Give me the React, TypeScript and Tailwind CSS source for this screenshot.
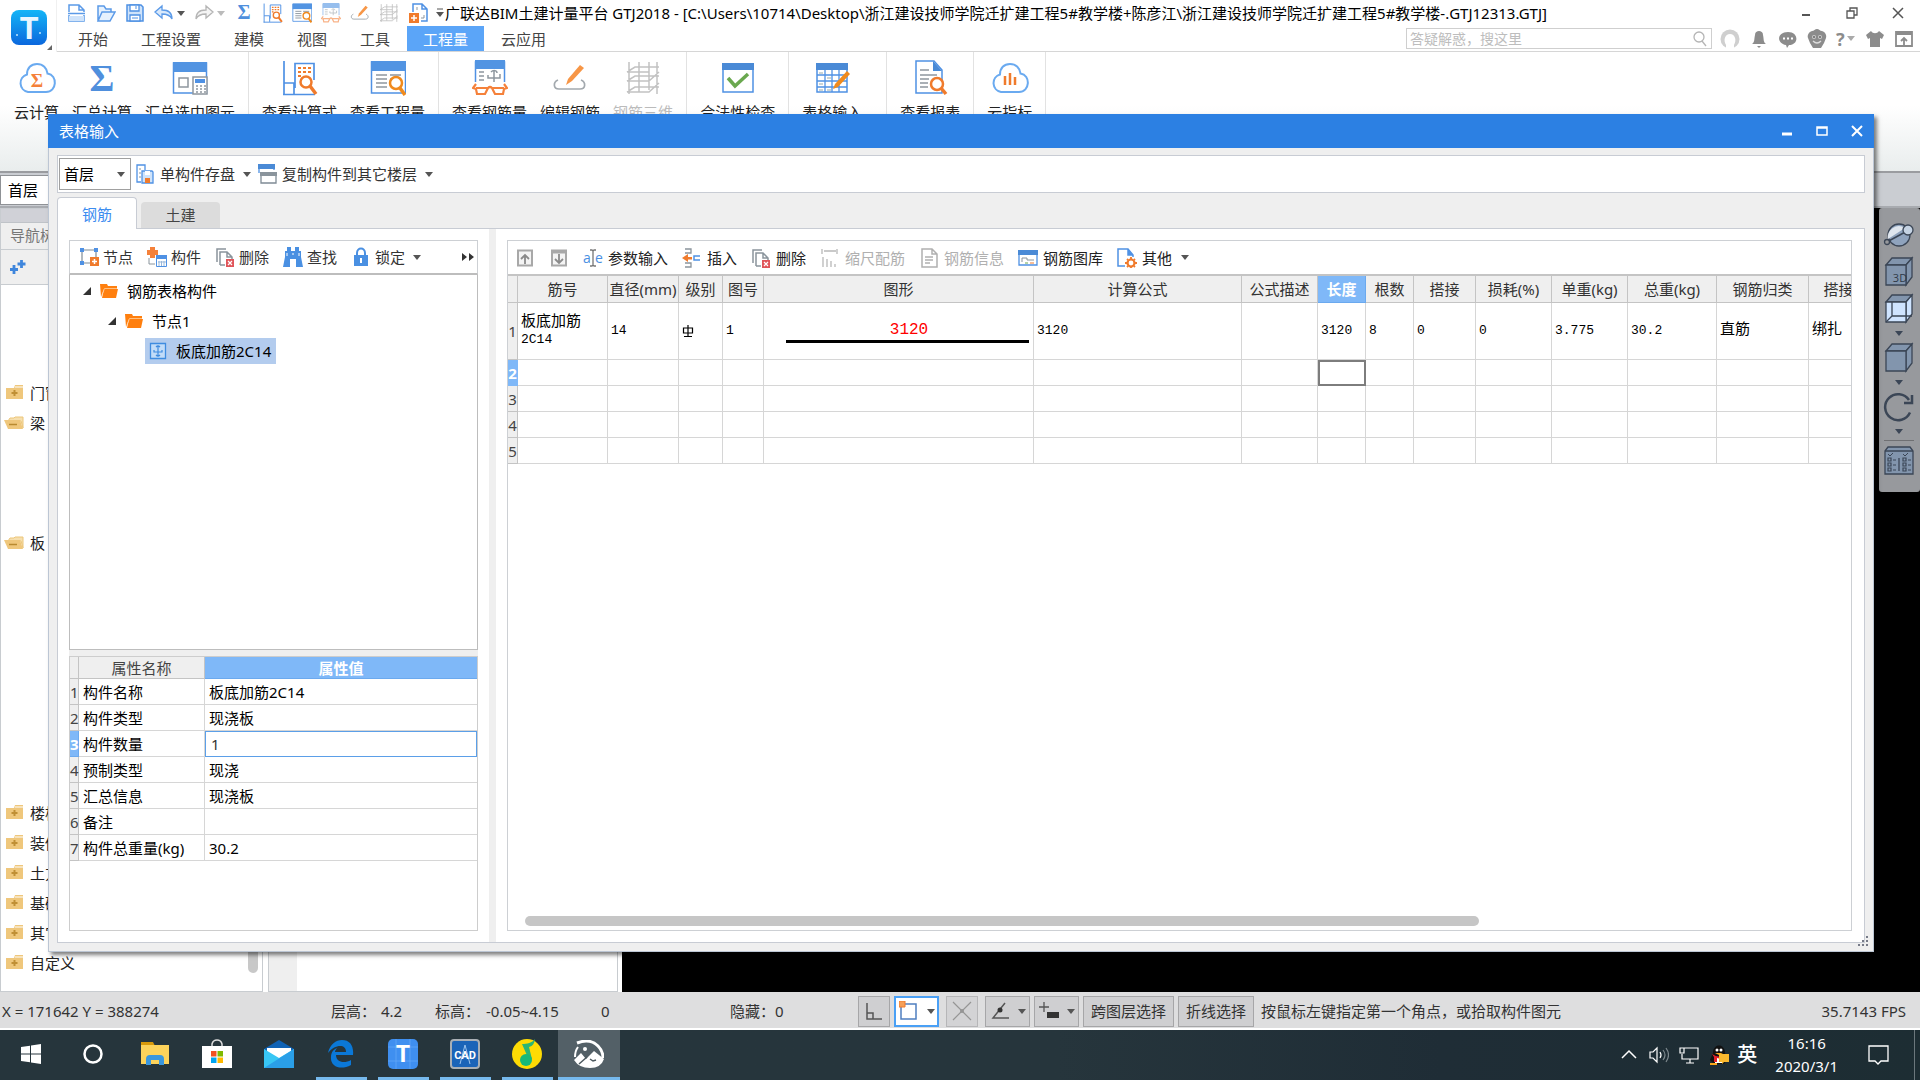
import type { ReactNode } from "react"

type IconProps = { children: ReactNode; w?: number; h?: number; className?: string }

function Icon({ children, w = 20, h = 20, className = "" }: IconProps) {
  return (
    <svg width={w} height={h} viewBox={`0 0 ${w} ${h}`} fill="none" className={`shrink-0 ${className}`} aria-hidden="true">
      {children}
    </svg>
  )
}

function Caret({ className = "text-[#555]" }: { className?: string }) {
  return (
    <Icon w={8} h={5} className={className}>
      <path d="M0 0h8L4 5z" fill="currentColor" />
    </Icon>
  )
}

/* ---------- quick access icons ---------- */

const NewFileIcon = () => (
  <Icon>
    <path d="M2 9V2h10l5 5v2M12 2v5h5M2 12v6h15v-6M1 10.500h17" stroke="#5b9ae8" strokeWidth="1.500" />
    <path d="M2 13h15v5H2z" fill="#cfe3fa" />
  </Icon>
)
const OpenIcon = () => (
  <Icon>
    <path d="M2 18V3h6l2 3h5v3M2 18l4-9h13l-5 9z" stroke="#5b9ae8" strokeWidth="1.500" fill="#e6f1fd" />
  </Icon>
)
const SaveIcon = () => (
  <Icon>
    <path d="M2 2h14l2 2v14H2z" fill="#cfe3fa" stroke="#4f91e4" strokeWidth="1.500" />
    <path d="M5 2h9v6H5z" fill="#fff" stroke="#4f91e4" strokeWidth="1.300" />
    <path d="M5 12h10v6H5z" fill="#fff" stroke="#4f91e4" strokeWidth="1.300" />
    <path d="M11 3v3M7 15h6" stroke="#4f91e4" />
  </Icon>
)
const UndoIcon = () => (
  <Icon>
    <path d="M1 9l7-6v4c7 0 10 3 10 9-2-4-5-5-10-5v4z" fill="#d9e9fb" stroke="#5b9ae8" strokeWidth="1.300" />
  </Icon>
)
const RedoIcon = () => (
  <Icon>
    <path d="M19 9l-7-6v4C5 7 2 10 2 16c2-4 5-5 10-5v4z" fill="#f4f4f4" stroke="#b5b5b5" strokeWidth="1.300" />
  </Icon>
)

const FormulaLookup = ({ size = 20 }: { size?: number }) => (
  <svg width={size} height={size} viewBox="0 0 36 36" fill="none" aria-hidden="true">
    <path d="M2 1v34M1 34.500h32M2 23h10v11M13 28V3.500h19V20" stroke="#4f91e4" strokeWidth="1.700" />
    <path d="M16 8h3m2 0h3m2 0h3M16 12h3m2 0h3m2 0h3M16 16h3" stroke="#f07b2c" strokeWidth="2.200" />
    <circle cx="24" cy="22" r="5.500" fill="#fff" stroke="#f07b2c" strokeWidth="2.500" />
    <path d="M28 26l6 8" stroke="#f07b2c" strokeWidth="3.500" />
  </svg>
)
const QuantityLookup = ({ size = 20 }: { size?: number }) => (
  <svg width={size} height={size} viewBox="0 0 36 36" fill="none" aria-hidden="true">
    <path d="M1.500 2h34v31h-34z" fill="#fff" stroke="#4f91e4" strokeWidth="1.500" />
    <path d="M1 1h35v10H1z" fill="#5294e2" />
    <path d="M6 15h11m3 0h11M6 19h11m3 0h5M6 23h11M6 27h11" stroke="#8e979f" strokeWidth="1.700" />
    <circle cx="26" cy="23" r="6" fill="#fff" stroke="#f08a1d" strokeWidth="2.500" />
    <path d="M30 28l5 7" stroke="#f08a1d" strokeWidth="3.500" />
  </svg>
)
const RebarGlasses = ({ size = 20 }: { size?: number }) => (
  <svg width={size} height={size} viewBox="0 0 36 36" fill="none" aria-hidden="true">
    <path d="M3.500 22V2h29v20" stroke="#4f91e4" strokeWidth="1.500" />
    <path d="M3 0h30v9H3z" fill="#5294e2" />
    <path d="M7 12h5M7 16h5M7 20h5M22 11v11M16 15v3h12v-4M19 12c2-2 6-2 6 1" stroke="#8e979f" strokeWidth="1.500" />
    <path d="M4 24L1 28l3 1 1 5h8l3-6H4M32 24l3 4-3 1-1 5h-8l-3-6h12M16 28q2-2 4 0" stroke="#f5813a" strokeWidth="2.200" />
  </svg>
)
const PencilEdit = ({ size = 20 }: { size?: number }) => (
  <svg width={size} height={size} viewBox="0 0 36 36" fill="none" aria-hidden="true">
    <path d="M6 20c-5 2-5 9 1 9h21c6 0 6-7 1-9" stroke="#a3a9ae" strokeWidth="1.700" />
    <path d="M28 5l4 3-12 13-6 4 2-6z" fill="#f79646" />
  </svg>
)
const Grid3d = ({ size = 20 }: { size?: number }) => (
  <svg width={size} height={size} viewBox="0 0 36 36" fill="none" aria-hidden="true">
    <path d="M4 2v32M14 2v30M24 2v28M32 2v32M2 32l8-5h24M2 21l8-5h24M2 12l8-5h24M2 32h22l10-9M2 21h22l10-9M2 12h22" stroke="#c2c2c2" strokeWidth="1.500" />
  </svg>
)
const PageAdd = () => (
  <Icon>
    <path d="M5 9V1h9l5 5v12h-6M14 1v5h5" stroke="#4f91e4" strokeWidth="1.500" />
    <path d="M9 7V4M13 15h3v-3" stroke="#8e979f" />
    <path d="M1 10h10v10H1z" fill="#f07b2c" />
    <path d="M6 12v6M3 15h6" stroke="#fff" strokeWidth="1.500" />
  </Icon>
)

/* ---------- ribbon icons ---------- */

const Cloud = ({ children }: { children: ReactNode }) => (
  <Icon w={40} h={36}>
    <path
      d="M11 32a9 9 0 0 1-1-17.500C10 8 14 4 20 4s10 4 10.500 9.500C41 15 40 32 29 32z"
      stroke="#6aaaf0"
      strokeWidth="2"
    />
    {children}
  </Icon>
)
const SumSelected = () => (
  <Icon w={36} h={36}>
    <path d="M1.500 3h33v30h-33z" fill="#fff" stroke="#4f91e4" strokeWidth="1.500" />
    <path d="M1 2h34v10H1z" fill="#5294e2" />
    <path d="M7 18h9v9H7z" stroke="#8e979f" strokeWidth="1.500" />
    <path d="M21 17h14v17H21z" fill="#fff" stroke="#8e979f" strokeWidth="1.500" />
    <path d="M23 19h10v4H23z" fill="#4f91e4" />
    <path d="M24 26h2m2 0h2m2 0h2M24 29h2m2 0h2m2 0h2M24 32h2m2 0h2m2 0h2" stroke="#8e979f" strokeWidth="1.500" />
  </Icon>
)
const CheckIcon = () => (
  <Icon w={36} h={36}>
    <path d="M3 4h30v28H3z" fill="#fff" stroke="#4f91e4" strokeWidth="1.500" />
    <path d="M2 3h32v7H2z" fill="#4a8ad6" />
    <path d="M8 18l7 8 13-12" stroke="#6aa84f" strokeWidth="3.500" />
  </Icon>
)
const TableEdit = () => (
  <Icon w={36} h={36}>
    <path d="M3 4h30v28H3z" fill="#fff" stroke="#4f91e4" strokeWidth="1.500" />
    <path d="M2 3h32v7H2z" fill="#4a8ad6" />
    <path d="M3 15h30M3 21h30M3 27h30M11 10v22M18 10v22M25 10v22" stroke="#4f91e4" strokeWidth="1.300" />
    <path d="M5 13h4M13 18h4M5 24h4M5 30h4M13 30h4" stroke="#9aa" />
    <path d="M33 11l3 3-12 13-5 2 2-5z" fill="#f08a1d" />
  </Icon>
)
const ReportIcon = () => (
  <Icon w={36} h={36}>
    <path d="M4 1h18l8 9v23H4z" fill="#fff" stroke="#4f91e4" strokeWidth="1.500" />
    <path d="M21 1v10h9z" fill="#4a8ad6" />
    <path d="M8 10h9M8 15h17M8 19h9M8 23h8M8 27h8" stroke="#8e979f" strokeWidth="1.500" />
    <circle cx="25" cy="24" r="6" fill="#fff" stroke="#f07b2c" strokeWidth="2.500" />
    <path d="M29 28l5 6" stroke="#f07b2c" strokeWidth="3.500" />
  </Icon>
)

const Sigma = ({ className }: { className: string }) => (
  <span className={`font-['Liberation_Serif',serif] font-bold ${className}`}>Σ</span>
)

type RibbonItem = { label: string; icon: ReactNode; off?: boolean }

const ribbonGroups: { wide?: boolean; items: RibbonItem[] }[] = [
  {
    items: [
      {
        label: "云计算",
        icon: (
          <Cloud>
            <text x="20" y="27" textAnchor="middle" fill="#f5813a" fontSize="19" fontWeight="700" fontFamily="Liberation Serif">
              Σ
            </text>
          </Cloud>
        ),
      },
      { label: "汇总计算", icon: <Sigma className="text-[38px] leading-9 text-[#4f8fdd]" /> },
      { label: "汇总选中图元", icon: <SumSelected /> },
    ],
  },
  {
    items: [
      { label: "查看计算式", icon: <FormulaLookup size={36} /> },
      { label: "查看工程量", icon: <QuantityLookup size={36} /> },
    ],
  },
  {
    items: [
      { label: "查看钢筋量", icon: <RebarGlasses size={36} /> },
      { label: "编辑钢筋", icon: <PencilEdit size={36} /> },
      { label: "钢筋三维", icon: <Grid3d size={36} />, off: true },
    ],
  },
  { items: [{ label: "合法性检查", icon: <CheckIcon /> }] },
  { wide: true, items: [{ label: "表格输入", icon: <TableEdit /> }] },
  { items: [{ label: "查看报表", icon: <ReportIcon /> }] },
  {
    items: [
      {
        label: "云指标",
        icon: (
          <Cloud>
            <path d="M15 25v-9M20 25V13M25 25v-8" stroke="#f07b2c" strokeWidth="2.500" />
          </Cloud>
        ),
      },
    ],
  },
]

const menuTabs = ["开始", "工程设置", "建模", "视图", "工具", "工程量", "云应用"]

function AppHeader() {
  return (
    <header className="flex h-[52px] bg-white">
      <div className="relative w-[57px] shrink-0 border-r border-[#f0f0f0]">
        <svg width="36" height="44" viewBox="0 0 36 44" className="mt-1.5 ml-[11px]" aria-hidden="true">
          <defs>
            <linearGradient id="logo" x1="0" y1="0" x2="0" y2="1">
              <stop offset="0" stopColor="#13b5f7" />
              <stop offset="1" stopColor="#0b67dd" />
            </linearGradient>
          </defs>
          <rect y="4" width="36" height="35" rx="8" fill="url(#logo)" />
          <text x="18" y="33" textAnchor="middle" fill="#e8f6ff" fontSize="31" fontWeight="900" fontFamily="Lato">
            T
          </text>
          <circle cx="6" cy="29" r="1" fill="#bfe6ff" />
          <circle cx="29" cy="27" r="1" fill="#bfe6ff" />
        </svg>
        <svg width="5" height="5" className="absolute right-1 bottom-[2px]" aria-hidden="true">
          <path d="M5 0v5H0z" fill="#666" />
        </svg>
      </div>
      <div className="flex min-w-0 flex-1 flex-col border-b border-[#d6d6d6]">
        <div className="flex h-[26px] items-center pl-[10px]">
          <div className="flex items-center gap-[9px]">
            <button aria-label="新建"><NewFileIcon /></button>
            <button aria-label="打开"><OpenIcon /></button>
            <button aria-label="保存"><SaveIcon /></button>
            <button aria-label="撤销" className="flex items-center gap-[3px]"><UndoIcon /><Caret /></button>
            <button aria-label="恢复" className="flex items-center gap-[3px]"><RedoIcon /><Caret className="text-[#bbb]" /></button>
            <button aria-label="汇总" className="w-5"><Sigma className="text-xl leading-5 text-[#4f8fdd]" /></button>
            <button aria-label="查看计算式"><FormulaLookup /></button>
            <button aria-label="查看工程量"><QuantityLookup /></button>
            <button aria-label="查看钢筋量" className="opacity-60"><RebarGlasses /></button>
            <button aria-label="编辑钢筋"><PencilEdit /></button>
            <button aria-label="钢筋三维"><Grid3d /></button>
            <button aria-label="添加"><PageAdd /></button>
          </div>
          <button aria-label="更多" className="ml-2">
            <Icon w={8} h={10}>
              <path d="M1 1h6" stroke="#555" />
              <path d="M0 4h8L4 9z" fill="#555" />
            </Icon>
          </button>
          <h1 className="ml-px truncate text-[15px] leading-6 text-black">
            广联达BIM土建计量平台 GTJ2018 - [C:\Users\10714\Desktop\浙江建设技师学院迁扩建工程5#教学楼+陈彦江\浙江建设技师学院迁扩建工程5#教学楼-.GTJ12313.GTJ]
          </h1>
          <div className="ml-auto flex items-center gap-[34px] pr-4 text-[#555]">
            <button aria-label="最小化"><Icon w={12} h={12}><path d="M2 8h8" stroke="currentColor" strokeWidth="2" /></Icon></button>
            <button aria-label="还原"><Icon w={12} h={12}><path d="M1 4h7v7H1zM4 4V1h7v7H8" stroke="currentColor" strokeWidth="1.300" /></Icon></button>
            <button aria-label="关闭"><Icon w={12} h={12}><path d="M1 1l10 10M11 1L1 11" stroke="currentColor" strokeWidth="1.500" /></Icon></button>
          </div>
        </div>
        <div className="flex h-[25px] items-center justify-between">
          <nav className="flex gap-px pl-[5px]">
            {menuTabs.map((tab) => (
              <button
                key={tab}
                className={`h-[25px] px-4 text-[15px] leading-6 ${tab === "工程量" ? "bg-[#5ba5f8] text-white" : "text-[#444]"}`}
              >
                {tab}
              </button>
            ))}
          </nav>
          <div className="flex items-center text-[#8c8c8c]">
            <label className="mr-2 flex h-[21px] w-[306px] items-center border border-[#cfcfcf] bg-white px-[3px]">
              <input
                aria-label="搜索"
                placeholder="答疑解惑，搜这里"
                className="min-w-0 flex-1 text-sm leading-5 outline-none placeholder:text-[#bdbdbd]"
              />
              <Icon w={18} h={16}>
                <circle cx="9" cy="6" r="5" stroke="#b5b5b5" strokeWidth="1.300" />
                <path d="M12 10l4 5" stroke="#b5b5b5" strokeWidth="1.300" />
              </Icon>
            </label>
            <div className="flex items-center gap-[9px] pr-[6px]">
              <button aria-label="用户">
                <Icon>
                  <circle cx="10" cy="10" r="9.500" fill="#cfcfcf" />
                  <path d="M6 20v-4c-3-5-1-11 4-11s7 6 4 11v4z" fill="#fff" />
                </Icon>
              </button>
              <button aria-label="通知">
                <Icon><path d="M3 15c3-2 2-5 3-9 0-3 2-4 4-4s4 1 4 4c1 4 0 7 3 9zM8 17h4l-2 2z" fill="currentColor" /></Icon>
              </button>
              <button aria-label="消息">
                <Icon>
                  <path d="M10 3c11 0 11 13 1 13l-2 3-1-3C-2 14-1 3 10 3z" fill="currentColor" />
                  <path d="M5 9.500h2m2 0h2m2 0h2" stroke="#fff" strokeWidth="2" />
                </Icon>
              </button>
              <button aria-label="客服">
                <Icon>
                  <path d="M10 0c2 0 3 2 5 2 3 1 5 4 4 7l-2 5-3 5H6l-3-5-2-5C0 6 2 3 5 2c2 0 3-2 5-2z" fill="currentColor" />
                  <circle cx="7" cy="8" r="2" fill="#ccc" />
                  <circle cx="13" cy="8" r="2" fill="#ccc" />
                  <circle cx="7" cy="8" r="1" fill="#666" />
                  <circle cx="13" cy="8" r="1" fill="#666" />
                  <path d="M6 12q4 4 8 0" stroke="#ddd" strokeWidth="1.300" />
                </Icon>
              </button>
              <button aria-label="帮助" className="flex w-5 items-center gap-[2px] text-lg leading-5 font-bold">
                ?<Caret className="text-[#aaa]" />
              </button>
              <button aria-label="皮肤">
                <Icon><path d="M6 2c2 3 6 3 8 0l5 4-2 4-2-1v9H5V9l-2 1-2-4z" fill="currentColor" /></Icon>
              </button>
              <button aria-label="收起">
                <Icon>
                  <path d="M2 3h16v14H2zM2 5h16" stroke="currentColor" strokeWidth="1.800" />
                  <path d="M10 16V9M7 12l3-3 3 3" stroke="currentColor" strokeWidth="1.800" />
                </Icon>
              </button>
            </div>
          </div>
        </div>
      </div>
    </header>
  )
}

function Ribbon() {
  return (
    <div className="flex h-[121px] items-start border-b-2 border-[#9a9ca0] bg-linear-to-b from-white from-45% to-[#e9eded] pl-[14px]">
      {ribbonGroups.map(({ wide, items }) => (
        <div
          key={items[0].label}
          className={`mr-[13px] flex gap-[13px] border-r border-[#e2e2e2] ${wide ? "pr-6" : "pr-[13px]"}`}
        >
          {items.map((item) => (
            <button
              key={item.label}
              className={`flex flex-col items-center pt-2 text-[15px] leading-6 whitespace-nowrap ${item.off ? "text-[#bbb]" : "text-[#222]"}`}
            >
              <span className="flex h-9 w-full items-center justify-center">{item.icon}</span>
              <span className="mt-1">{item.label}</span>
            </button>
          ))}
        </div>
      ))}
    </div>
  )
}

/* ---------- background workspace ---------- */

function NavFolder({ label, open }: { label: string; open?: boolean }) {
  return (
    <li className="flex h-[30px] items-center gap-[6px] pl-[3px] text-[15px] leading-6 whitespace-nowrap text-[#222]">
      {open ? (
        <Icon>
          <path d="M6 5h4l1-1h8v11l-2-7H4z" fill="#f6dfae" stroke="#ecc67a" />
          <path d="M0 7h16l3 9H4z" fill="#efc77c" />
          <path d="M5 11.500h8" stroke="#b98a30" strokeWidth="1.500" />
        </Icon>
      ) : (
        <Icon>
          <path d="M2 5h8l1-3h8v14H2z" fill="#efc77c" />
          <path d="M11 4h8" stroke="#fff" />
          <path d="M10.500 7v6M7.500 10h6" stroke="#c08f35" strokeWidth="2" />
        </Icon>
      )}
      {label}
    </li>
  )
}

const cubeFace = "M3 9h20v20H3z"
const cubeTop = "M3 9l6-7h20l-6 7z"
const cubeSide = "M23 9l6-7v19l-6 8z"

function Cube({ light, children }: { light?: boolean; children?: ReactNode }) {
  return (
    <Icon w={32} h={31}>
      <path d={cubeTop} fill="#8295ad" stroke="#3b4656" strokeWidth="1.300" />
      <path d={cubeSide} fill={light ? "#cfe4ff" : "#8295ad"} stroke="#3b4656" strokeWidth="1.300" />
      <path d={cubeFace} fill={light ? "#cfe4ff" : "#8295ad"} stroke="#3b4656" strokeWidth="1.300" />
      {children}
    </Icon>
  )
}

function ViewToolbar() {
  return (
    <aside className="flex h-[284px] w-[41px] flex-col items-center rounded-[3px] bg-[#97999d] pt-[11px] pr-[2px]">
      <button aria-label="动态观察">
        <Icon w={32} h={32}>
          <circle cx="16" cy="16" r="11" fill="#8fa3bd" stroke="#3b4656" strokeWidth="1.300" />
          <path d="M5 20L22 9a11 11 0 0 0-17 11z" fill="#dfe6ee" />
          <path d="M2 24l24-13" stroke="#3b4656" strokeWidth="1.500" />
          <circle cx="25" cy="11" r="5" fill="#c4d2e2" stroke="#3b4656" strokeWidth="1.300" />
          <circle cx="4" cy="23" r="2.500" fill="#97999d" stroke="#3b4656" strokeWidth="1.300" />
        </Icon>
      </button>
      <button aria-label="三维" className="mt-[5px]">
        <Cube>
          <text x="17" y="26" textAnchor="middle" fill="#2f3947" fontSize="11" fontFamily="Open Sans">3D</text>
        </Cube>
      </button>
      <button aria-label="线框" className="mt-[6px] flex flex-col items-center">
        <Cube light>
          <path d="M9 9v14h14M9 23l-6 6M23 23h6" stroke="#3b4656" strokeWidth="1.300" />
        </Cube>
        <Caret className="mt-[7px] text-[#3b4656]" />
      </button>
      <button aria-label="着色" className="mt-[6px] flex flex-col items-center">
        <Cube />
        <Caret className="mt-[7px] text-[#3b4656]" />
      </button>
      <button aria-label="旋转" className="mt-[6px] flex flex-col items-center">
        <Icon w={32} h={31}>
          <path d="M27 21.500A13 13 0 1 1 26 9" stroke="#3b4656" strokeWidth="2.500" />
          <path d="M29 4v8h-8" stroke="#3b4656" strokeWidth="2.500" />
        </Icon>
        <Caret className="mt-[7px] text-[#3b4656]" />
      </button>
      <hr className="mt-[6px] mb-1 w-[30px] border-[#6f7073]" />
      <button aria-label="显示设置">
        <Icon w={32} h={31}>
          <path d="M2 6l3-4h22l3 4v23H2z" fill="#8295ad" stroke="#3b4656" strokeWidth="1.300" />
          <path d="M2 6h28M16 13v13" stroke="#3b4656" strokeWidth="1.300" />
          <path d="M5 9l2 2 3-3M20 9l2 2 3-3" stroke="#3b4656" />
          <path d="M5 13h3v3H5zM5 18h3v3H5zM5 23h3v3H5zM20 13h3v3h-3zM20 18h3v3h-3zM20 23h3v3h-3zM10 15h3M10 20h3M10 25h3M25 15h3M25 20h3M25 25h3" stroke="#3b4656" strokeWidth="1.200" />
        </Icon>
      </button>
    </aside>
  )
}

function Workspace() {
  return (
    <>
      <div className="flex h-[35px] items-center border-b-2 border-[#a8abb0] bg-[#cacdd2]">
        <select aria-label="楼层" className="h-[30px] w-40 appearance-none border border-[#8f9296] bg-white pl-[7px] text-[15px] leading-6 text-black">
          <option>首层</option>
        </select>
      </div>
      <main className="flex flex-1 bg-white">
        <section className="flex w-[263px] flex-col border border-[#c8ccd0]">
          <div className="h-[14px] border-b border-[#bfc3c8] bg-[#d0d1d7]" />
          <h2 className="h-[27px] border-b border-[#c8ccd0] bg-[#efefef] pl-[9px] text-[15px] leading-6 text-[#777]">导航树</h2>
          <div className="flex h-[35px] items-center border-b border-[#c8ccd0] bg-[#efefef] pl-2">
            <button aria-label="展开">
              <Icon w={18} h={16}>
                <path d="M5 6v9M1 10.500h8M12.500 1v8M8.500 5h8" stroke="#3f86dc" strokeWidth="2.800" />
              </Icon>
            </button>
          </div>
          <div className="flex flex-1 justify-between">
            <ul className="pt-[93px]">
              <NavFolder label="门窗洞" />
              <NavFolder label="梁" open />
              <li className="h-[90px]" />
              <NavFolder label="板" open />
              <li className="h-[240px]" />
              {["楼梯", "装修", "土方", "基础", "其它", "自定义"].map((label) => (
                <NavFolder key={label} label={label} />
              ))}
            </ul>
            <div className="mr-1 mb-[18px] w-[10px] rounded-full bg-[#c8c8c8]" />
          </div>
        </section>
        <section className="ml-[5px] flex w-[350px] border border-[#c8ccd0]">
          <div className="w-7 bg-[#efefef]" />
        </section>
        <div className="ml-1 flex flex-1 justify-end bg-black">
          <ViewToolbar />
        </div>
      </main>
    </>
  )
}

/* ---------- dialog ---------- */

const DeleteIcon = () => (
  <Icon>
    <path d="M2 15V2h9" stroke="#8a949c" strokeWidth="1.500" />
    <path d="M5 18V5h7l5 5v3M12 5v5h5M5 18h5" stroke="#8a949c" strokeWidth="1.500" />
    <path d="M11 12h8v8h-8z" fill="#e0555a" />
    <path d="M13 14l4 4M17 14l-4 4" stroke="#fff" strokeWidth="1.200" />
  </Icon>
)
const treeTools: { label: string; icon: ReactNode; caret?: boolean }[] = [
  {
    label: "节点",
    icon: (
      <Icon>
        <path d="M3 3h14v13H3z" stroke="#7f8b95" strokeWidth="1.200" />
        <path d="M1 1h4v4H1zM15 1h4v4h-4zM1 14h4v4H1z" fill="#4f91e4" />
        <path d="M11 10h9v9h-9z" fill="#f07b2c" />
        <path d="M15.500 12v5M13 14.500h5" stroke="#fff" strokeWidth="1.500" />
      </Icon>
    ),
  },
  {
    label: "构件",
    icon: (
      <Icon>
        <path d="M3 0h5v3h3v5H8v3H3V8H0V3h3z" fill="#f5813a" />
        <path d="M2 11v6h6" stroke="#8a949c" />
        <path d="M9.500 8.500h10v11h-10z" fill="#fff" stroke="#4f91e4" />
        <path d="M9 8h11v4H9z" fill="#4f91e4" />
        <path d="M12 14v5M14.500 14v5M17 14v5M11 15h8" stroke="#9bb9da" />
      </Icon>
    ),
  },
  { label: "删除", icon: <DeleteIcon /> },
  {
    label: "查找",
    icon: (
      <Icon>
        <path d="M4 0h4v4h4V0h4v4h2v6l2 10h-7v-8H7v8H0l2-10V4h2z" fill="#4a90e2" />
        <path d="M4 6v3M16 6v3M9 7h2" stroke="#fff" />
      </Icon>
    ),
  },
  {
    label: "锁定",
    caret: true,
    icon: (
      <Icon>
        <path d="M6 9V6c0-6 8-6 8 0v3" stroke="#4a90e2" strokeWidth="2" />
        <path d="M3 8h14v11H3z" fill="#4a90e2" />
        <path d="M10 11v5" stroke="#fff" strokeWidth="2" />
      </Icon>
    ),
  },
]

const rebarTools: { label: string; icon: ReactNode; caret?: boolean; off?: boolean }[] = [
  {
    label: "参数输入",
    icon: (
      <Icon>
        <text x="0" y="15" fill="#4a90e2" fontSize="14" fontFamily="Open Sans">a</text>
        <text x="12" y="15" fill="#4a90e2" fontSize="14" fontFamily="Open Sans">e</text>
        <path d="M7 2h2l1 1 1-1h2M10 3v14M7 18h2l1-1 1 1h2" stroke="#777" strokeWidth="1.300" />
      </Icon>
    ),
  },
  {
    label: "插入",
    icon: (
      <Icon>
        <path d="M3 1h6v4H3M3 15h6v4H3" stroke="#8a949c" strokeWidth="1.300" />
        <path d="M0 10l6-4v3h4v2.500H6V14z" fill="#f07b2c" />
        <path d="M18 8h-6v4h6" stroke="#4f91e4" strokeWidth="1.500" />
      </Icon>
    ),
  },
  { label: "删除", icon: <DeleteIcon /> },
  {
    label: "缩尺配筋",
    off: true,
    icon: (
      <Icon>
        <path d="M2 1v5M17 1v5M4 3h12M3 9v10M7 11v8M11 13v6M15 16v3" stroke="#b8b8b8" strokeWidth="1.300" />
      </Icon>
    ),
  },
  {
    label: "钢筋信息",
    off: true,
    icon: (
      <Icon>
        <path d="M3 1h10l5 5v13H3zM13 1v5h5M6 9h8M6 12h8M6 15h5" stroke="#b0b0b0" strokeWidth="1.500" />
      </Icon>
    ),
  },
  {
    label: "钢筋图库",
    icon: (
      <Icon>
        <path d="M1 3h18v14H1z" fill="#fff" stroke="#4f91e4" strokeWidth="1.300" />
        <path d="M0 2h20v5H0z" fill="#4a8ad6" />
        <path d="M4 14v-4h5v2h7" stroke="#8a949c" />
        <path d="M7 15h3" stroke="#6aa84f" />
        <path d="M12 15h4" stroke="#f07b2c" />
      </Icon>
    ),
  },
  {
    label: "其他",
    caret: true,
    icon: (
      <Icon>
        <path d="M8 18H1V1h10l5 6v2M11 1v6h5" stroke="#4f91e4" strokeWidth="1.500" />
        <path d="M11 1v6h5z" fill="#4f91e4" />
        <circle cx="14" cy="15" r="3.500" stroke="#f07b2c" strokeWidth="2.200" />
        <path d="M14 9v2M14 19v1M8 15h2M18 15h2M10 11l1 1M18 11l-1 1M10 19l1-1M18 19l-1-1" stroke="#f07b2c" strokeWidth="1.800" />
      </Icon>
    ),
  },
]

const properties = [
  ["构件名称", "板底加筋2C14"],
  ["构件类型", "现浇板"],
  ["构件数量", "1"],
  ["预制类型", "现浇"],
  ["汇总信息", "现浇板"],
  ["备注", ""],
  ["构件总重量(kg)", "30.2"],
]

const Folder = () => (
  <Icon w={18} h={18}>
    <path d="M0 2h7l1 2h9v3H4L1 15z" fill="#ff7f0e" />
    <path d="M4 7h14l-2 9H2z" fill="#ff7f0e" />
    <path d="M2 13l2.500-6.500H17" stroke="#ffd0a0" strokeWidth=".8" />
  </Icon>
)
const Expanded = () => (
  <Icon w={8} h={8}>
    <path d="M8 0v8H0z" fill="#333" />
  </Icon>
)

function TreePane() {
  return (
    <div className="my-[11px] ml-[11px] flex w-[409px] shrink-0 flex-col">
      <div className="flex h-[35px] items-center gap-[14px] border border-b-2 border-[#cdd0d4] border-b-[#bdbdbd] pr-[2px] pl-[9px]">
        {treeTools.map((t) => (
          <button key={t.label} className="flex items-center gap-1 text-[15px] leading-6 text-[#333]">
            {t.icon}
            {t.label}
            {t.caret && <Caret className="ml-1 text-[#555]" />}
          </button>
        ))}
        <button aria-label="更多" className="ml-auto">
          <Icon w={14} h={10}>
            <path d="M1 1l5 4-5 4zM8 1l5 4-5 4z" fill="#333" />
          </Icon>
        </button>
      </div>
      <ul className="min-h-[375px] border border-t-0 border-[#bdbdbd] pt-px text-[15px] leading-6 text-black">
        <li className="flex h-[30px] items-center gap-[9px] pl-[13px]">
          <Expanded />
          <Folder />
          钢筋表格构件
        </li>
        <li className="flex h-[30px] items-center gap-[9px] pl-[38px]">
          <Expanded />
          <Folder />
          节点1
        </li>
        <li className="flex h-[30px] items-center pl-[75px]">
          <span className="flex h-[26px] items-center gap-2 bg-[#b3ccee] pr-[5px] pl-1">
            <Icon w={19} h={18}>
              <path d="M1.500 1.500h15v15h-15z" stroke="#3f8ce0" strokeWidth="1.300" fill="#c2dcf8" />
              <path d="M9 4v10M5 8v2h8V8M7 5q2-2 4 0M7 13q2 2 4 0" stroke="#3f8ce0" strokeWidth="1.200" />
            </Icon>
            板底加筋2C14
          </span>
        </li>
      </ul>
      <div className="h-[6px] bg-[#efefef]" />
      <div className="flex-1 border border-[#cdcdcd]">
        <table className="w-full table-fixed border-separate border-spacing-0 text-[15px] leading-5 text-black">
          <colgroup>
            <col className="w-[9px]" />
            <col className="w-[126px]" />
            <col />
          </colgroup>
          <thead>
            <tr className="h-[22px]">
              <th className="border-r border-b border-[#c4c4c4] bg-[#efefef]" />
              <th className="border-r border-b border-[#c4c4c4] bg-[#efefef] font-normal text-[#444]">属性名称</th>
              <th className="border-b border-[#6ba9ee] bg-[#7fb8f8] text-white">属性值</th>
            </tr>
          </thead>
          <tbody>
            {properties.map(([name, value], i) => (
              <tr key={name} className="h-[26px]">
                <th
                  className={
                    i === 2
                      ? "border-r border-b border-[#6ba9ee] bg-[#7fb8f8] text-white"
                      : "border-r border-b border-[#c4c4c4] bg-[#efefef] font-normal text-[#444]"
                  }
                >
                  {i + 1}
                </th>
                <td className="border-r border-b border-[#d6d6d6] pl-1">{name}</td>
                {i === 2 ? (
                  <td className="border border-[#5b9fe8] pl-[5px]">
                    <input aria-label={name} defaultValue={value} className="block h-5 w-full text-[#333] outline-none" />
                  </td>
                ) : (
                  <td className="border-b border-[#d6d6d6] pl-1">{value}</td>
                )}
              </tr>
            ))}
          </tbody>
        </table>
      </div>
    </div>
  )
}

const columns = [
  { label: "筋号", width: "w-[90px]" },
  { label: "直径(mm)", width: "w-[71px]" },
  { label: "级别", width: "w-[44px]" },
  { label: "图号", width: "w-[41px]" },
  { label: "图形", width: "w-[270px]" },
  { label: "计算公式", width: "w-[208px]" },
  { label: "公式描述", width: "w-[76px]" },
  { label: "长度", width: "w-[48px]" },
  { label: "根数", width: "w-[48px]" },
  { label: "搭接", width: "w-[62px]" },
  { label: "损耗(%)", width: "w-[76px]" },
  { label: "单重(kg)", width: "w-[76px]" },
  { label: "总重(kg)", width: "w-[89px]" },
  { label: "钢筋归类", width: "w-[92px]" },
  { label: "搭接形式", width: "w-[90px]" },
]

const mono = "font-['Liberation_Mono','Noto_Sans_CJK_SC',monospace] text-[13px]"

const firstRow: ReactNode[] = [
  <span key="name" className="block text-[15px] leading-[17px]">
    板底加筋
    <br />
    <span className={mono}>2C14</span>
  </span>,
  "14",
  <Icon key="grade" w={14} h={14}>
    <path d="M1.500 4h9v5h-9zM6 1v11M2 12.500h8" stroke="#000" strokeWidth="1.200" />
  </Icon>,
  "1",
  <span key="shape" className="mr-[4px] ml-[19px] block border-b-[3px] border-black pl-[3px] text-center text-base leading-5 text-[#f00]">
    3120
  </span>,
  "3120",
  "",
  "3120",
  "8",
  "0",
  "0",
  "3.775",
  "30.2",
  <span key="kind" className="text-[15px]">直筋</span>,
  <span key="joint" className="text-[15px]">绑扎</span>,
]

function RebarPane() {
  return (
    <div className="my-[11px] mr-[12px] ml-[11px] flex min-w-0 flex-1 flex-col overflow-hidden border border-[#cdd0d4]">
      <div className="flex h-[35px] shrink-0 items-center gap-[14px] border-b-2 border-[#c4c4c4] pl-[7px]">
        <button aria-label="上移">
          <Icon>
            <path d="M3 2.500h14v15H3z" fill="#f4f4f4" stroke="#a8a8a8" strokeWidth="2" />
            <path d="M10 16V7M6 11l4-4 4 4" stroke="#8a8a8a" strokeWidth="1.800" />
          </Icon>
        </button>
        <button aria-label="下移">
          <Icon>
            <path d="M3 2.500h14v15H3z" fill="#f4f4f4" stroke="#a8a8a8" strokeWidth="2" />
            <path d="M3 4h14" stroke="#a8a8a8" strokeWidth="3" />
            <path d="M10 6v9M6 11l4 4 4-4" stroke="#8a8a8a" strokeWidth="1.800" />
          </Icon>
        </button>
        {rebarTools.map((t) => (
          <button
            key={t.label}
            disabled={t.off}
            className={`flex items-center gap-[5px] text-[15px] leading-6 whitespace-nowrap ${t.off ? "text-[#b0b0b0]" : "text-[#222]"}`}
          >
            {t.icon}
            {t.label}
            {t.caret && <Caret className="ml-1 text-[#555]" />}
          </button>
        ))}
      </div>
      <table className="w-[1391px] table-fixed border-separate border-spacing-0 text-[15px] leading-5">
        <colgroup>
          <col className="w-[10px]" />
          {columns.map((c) => (
            <col key={c.label} className={c.width} />
          ))}
        </colgroup>
        <thead>
          <tr className="h-[27px]">
            <th className="border-r border-b border-[#c4c4c4] bg-[#efefef]" />
            {columns.map((c) => (
              <th
                key={c.label}
                className={`border-r border-b whitespace-nowrap ${
                  c.label === "长度"
                    ? "border-[#6ba9ee] bg-[#7fb8f8] text-white"
                    : "border-[#c4c4c4] bg-[#efefef] font-normal text-[#333]"
                }`}
              >
                {c.label}
              </th>
            ))}
          </tr>
        </thead>
        <tbody>
          <tr className="h-[57px]">
            <th className="border-r border-b border-[#c4c4c4] bg-[#efefef] font-normal text-[#444]">1</th>
            {firstRow.map((cell, i) => (
              <td key={columns[i].label} className={`border-r border-b border-[#d6d6d6] pl-[3px] text-black ${mono}`}>
                {cell}
              </td>
            ))}
          </tr>
          {[2, 3, 4, 5].map((n) => (
            <tr key={n} className="h-[26px]">
              <th
                className={
                  n === 2
                    ? "border-r border-b border-[#7fb8f8] bg-[#7fb8f8] text-white"
                    : "border-r border-b border-[#c4c4c4] bg-[#efefef] font-normal text-[#444]"
                }
              >
                {n}
              </th>
              {columns.map((c) => (
                <td
                  key={c.label}
                  className={n === 2 && c.label === "长度" ? "border-2 border-[#7d7d7d]" : "border-r border-b border-[#d6d6d6]"}
                />
              ))}
            </tr>
          ))}
        </tbody>
      </table>
      <div className="mt-auto mb-1 ml-[17px] h-[10px] w-[71%] shrink-0 rounded-full bg-[#c6c6c6]" />
    </div>
  )
}

function TableInputDialog() {
  return (
    <div
      role="dialog"
      aria-label="表格输入"
      className="absolute top-[114px] right-[46px] bottom-[128px] left-[48px] flex flex-col border border-t-0 border-[#bcc6d4] bg-[#efefef] shadow-[3px_3px_4px_rgba(0,0,0,0.5)]"
    >
      <div className="-mx-px flex h-[34px] items-center justify-between bg-[#2c80e3] pr-[11px] pl-[11px] text-white">
        <h2 className="text-[15px] leading-6">表格输入</h2>
        <div className="flex items-center gap-[23px]">
          <button aria-label="最小化"><Icon w={12} h={12}><path d="M1 9h10" stroke="#fff" strokeWidth="3" /></Icon></button>
          <button aria-label="最大化"><Icon w={12} h={12}><path d="M1 2h10v8H1zM1 3h10" stroke="#fff" strokeWidth="1.500" /></Icon></button>
          <button aria-label="关闭"><Icon w={12} h={12}><path d="M1 1l10 10M11 1L1 11" stroke="#fff" strokeWidth="2" /></Icon></button>
        </div>
      </div>
      <div className="mx-2 mt-[7px] flex h-[38px] items-center border border-[#c8ccd4] bg-white pl-px text-[15px] leading-6 text-[#333]">
        <label className="relative">
          <select aria-label="楼层" className="block h-8 w-[72px] appearance-none border border-[#a0a0a0] bg-white pl-[4px] text-black">
            <option>首层</option>
          </select>
          <span className="pointer-events-none absolute top-[14px] right-[6px]"><Caret /></span>
        </label>
        <button className="ml-1 flex items-center gap-[5px]">
          <Icon>
            <path d="M10 6V1H2v17h4" stroke="#4f91e4" strokeWidth="1.300" />
            <path d="M4 5h2M4 9h2M4 13h2" stroke="#8a949c" />
            <path d="M7 7h10l1 1v11H7z" fill="#cfe3fa" stroke="#4f91e4" strokeWidth="1.300" />
            <path d="M10 14h5v5h-5z" fill="#f07b2c" />
            <path d="M10 7h5v4h-5z" fill="#fff" />
          </Icon>
          单构件存盘
          <Caret className="ml-[3px] text-[#555]" />
        </button>
        <button className="ml-[6px] flex items-center gap-[5px]">
          <Icon>
            <path d="M2 9V1h15v5" stroke="#4f91e4" strokeWidth="1.300" />
            <path d="M1 0h17v5H1z" fill="#4a8ad6" />
            <path d="M4 9h15v10H4z" fill="#fff" stroke="#7f8b95" strokeWidth="1.300" />
            <path d="M3 8h17v4H3z" fill="#8a949c" />
          </Icon>
          复制构件到其它楼层
          <Caret className="ml-[3px] text-[#555]" />
        </button>
      </div>
      <div className="flex h-[35px] items-end px-2 text-[15px] leading-6">
        <button className="z-10 -mb-px h-8 w-20 rounded-t border border-b-0 border-[#c8ccd4] bg-white text-[#3c8cf0]">钢筋</button>
        <button className="ml-1 h-[26px] w-[79px] rounded-t bg-[#dcdcdc] text-[#444]">土建</button>
      </div>
      <div className="relative mx-2 mb-2 flex min-h-0 flex-1 border border-[#c8ccd4] bg-white">
        <TreePane />
        <div className="ml-[11px] w-[7px] shrink-0 bg-[#efefef]" />
        <RebarPane />
      </div>
      <svg width="11" height="11" className="absolute right-1 bottom-1" aria-hidden="true">
        <path d="M8 0h2v2H8zM4 4h2v2H4zM8 4h2v2H8zM0 8h2v2H0zM4 8h2v2H4zM8 8h2v2H8z" fill="#777b88" />
      </svg>
    </div>
  )
}

/* ---------- status bar and taskbar ---------- */

function StatusBar() {
  const btn = "flex h-[31px] items-center justify-center border border-[#a6a6a8] bg-[#cfcfd1]"
  return (
    <footer className="flex h-[38px] items-center border-b-2 border-white bg-[#dededf] pt-[2px] text-[15px] leading-6 whitespace-nowrap text-[#333]">
      <span className="w-[328px] pl-[2px]">X = 171642 Y = 388274</span>
      <span className="w-[53px] pl-[3px]">层高：</span>
      <span className="w-[54px]">4.2</span>
      <span className="w-[51px]">标高：</span>
      <span className="w-[115px]">-0.05~4.15</span>
      <span className="w-[129px]">0</span>
      <span className="w-[45px]">隐藏：</span>
      <span className="w-[83px]">0</span>
      <div className="flex gap-1">
        <button aria-label="正交" className={`${btn} w-8`}>
          <Icon><path d="M3 2v16h15M3 12h6v6" stroke="#555" strokeWidth="1.500" /></Icon>
        </button>
        <button aria-label="矩形选择" className="flex h-[31px] w-[45px] items-center justify-center gap-2 border-2 border-[#4aa0f5] bg-white">
          <Icon>
            <path d="M2 3h15v15H2z" stroke="#4f7fc0" strokeWidth="1.500" />
            <path d="M0 0h6v6H0z" fill="#f5a05a" stroke="#f07b2c" />
          </Icon>
          <Caret />
        </button>
        <button aria-label="交点" className={`${btn} ml-[3px] w-8 opacity-70`}>
          <Icon><path d="M1 1l18 18M19 1L1 19" stroke="#777" strokeWidth="1.200" /><circle cx="10" cy="10" r="2" fill="#777" /></Icon>
        </button>
        <button aria-label="角度" className={`${btn} ml-[3px] w-[45px] gap-2`}>
          <Icon><path d="M15 2L3 17h16" stroke="#555" strokeWidth="1.500" /><circle cx="10" cy="9" r="2.500" fill="#333" /></Icon>
          <Caret />
        </button>
        <button aria-label="动态输入" className={`${btn} w-[45px] gap-2`}>
          <Icon><path d="M5 1v10M0 6h10" stroke="#555" strokeWidth="1.300" /><path d="M8 11h12v6H8z" fill="#333" /></Icon>
          <Caret />
        </button>
        <button className={`${btn} w-[91px]`}>跨图层选择</button>
        <button className={`${btn} w-[76px]`}>折线选择</button>
      </div>
      <span className="ml-[7px]">按鼠标左键指定第一个角点，或拾取构件图元</span>
      <span className="ml-auto pr-[14px]">35.7143 FPS</span>
    </footer>
  )
}

const taskApps: { label: string; running?: boolean; active?: boolean; icon: ReactNode }[] = [
  {
    label: "开始",
    icon: <Icon w={20} h={20}><path d="M0 3l9-1.300V9.500H0zM10 1.500L20 0v9.500H10zM0 10.500h9v7.800L0 17zM10 10.500h10V20l-10-1.500z" fill="#fff" /></Icon>,
  },
  { label: "Cortana", icon: <Icon w={20} h={20}><circle cx="10" cy="10" r="8.500" stroke="#fff" strokeWidth="2.500" /></Icon> },
  {
    label: "文件资源管理器",
    icon: (
      <Icon w={28} h={26}>
        <path d="M0 1h12l2 4H0z" fill="#d99a0b" />
        <path d="M0 4h28v19H0z" fill="#fdd35b" />
        <path d="M5 24v-6q0-4 4-4h10q4 0 4 4v6h-5v-5h-8v5z" fill="#3b97dd" />
      </Icon>
    ),
  },
  {
    label: "商店",
    icon: (
      <Icon w={30} h={30}>
        <path d="M10 8V5q1-4 5-4t5 4v3" stroke="#ddd" strokeWidth="1.500" />
        <path d="M0 7h30v22H0z" fill="#fff" />
        <path d="M9 12h5.500v5.500H9z" fill="#f25022" />
        <path d="M15.500 12H21v5.500h-5.500z" fill="#7fba00" />
        <path d="M9 18.500h5.500V24H9z" fill="#00a4ef" />
        <path d="M15.500 18.500H21V24h-5.500z" fill="#ffb900" />
      </Icon>
    ),
  },
  {
    label: "邮件",
    icon: (
      <Icon w={30} h={30}>
        <path d="M0 10L15 1l15 9v6H0z" fill="#0f62b5" />
        <path d="M3 9h24v12H3z" fill="#fff" />
        <path d="M0 10l15 9 15-9v19H0z" fill="#38c6f4" />
        <path d="M0 29l30-19v19z" fill="#2a9fe8" />
      </Icon>
    ),
  },
  {
    label: "Edge",
    running: true,
    icon: (
      <Icon w={26} h={28}>
        <path d="M0 13C2 4 8 0 14 0c8 0 12 6 11 15H8c0 7 8 9 15 5v5C12 31 2 26 3 17c0-5 3-8 6-9-1 1-2 3-2 4h11C18 3 6 5 0 13z" fill="#0b78d7" />
      </Icon>
    ),
  },
  {
    label: "广联达",
    running: true,
    icon: (
      <Icon w={30} h={30}>
        <rect width="30" height="30" rx="5" fill="#3f8ff0" />
        <path d="M0 8h30M0 22h30M8 0v30M22 0v30" stroke="#6cb0fa" strokeWidth=".6" />
        <text x="15" y="23" textAnchor="middle" fill="#fff" fontSize="23" fontWeight="900" fontFamily="Lato">T</text>
      </Icon>
    ),
  },
  {
    label: "CAD",
    running: true,
    icon: (
      <Icon w={30} h={30}>
        <rect x="1" y="1" width="28" height="28" rx="3" fill="#1b64b8" stroke="#a9afb5" strokeWidth="2" />
        <path d="M15 6l-5 19M15 6l5 19" stroke="#9cc4ee" />
        <text x="15" y="20" textAnchor="middle" fill="#fff" fontSize="11" fontWeight="700" fontFamily="Roboto">CAD</text>
      </Icon>
    ),
  },
  {
    label: "QQ音乐",
    running: true,
    icon: (
      <Icon w={30} h={30}>
        <circle cx="15" cy="15" r="15" fill="#fedb04" />
        <path d="M10 5c5 0 10-1 13-5-1 5-2 7-6 8l3 12-3 1z" fill="#2bb673" />
        <circle cx="14" cy="21" r="6" fill="#17b978" />
      </Icon>
    ),
  },
  {
    label: "图片查看",
    running: true,
    active: true,
    icon: (
      <Icon w={30} h={28}>
        <path d="M3 3q13-5 21 3 5 5 5 12" stroke="#fff" strokeWidth="3" />
        <path d="M4 7q-3 4-3 10" stroke="#fff" strokeWidth="2" />
        <path d="M0 20l7-7 5 6 8-8 10 8q-3 9-14 9T0 20z" fill="#fff" />
        <circle cx="11" cy="9" r="2" fill="#fff" />
        <path d="M5 24l8-7M16 19l3 2 3-1" stroke="#4b585e" strokeWidth="1.500" />
      </Icon>
    ),
  },
]

function Taskbar() {
  return (
    <div className="flex h-[50px] bg-linear-to-r from-[#26353c] from-55% via-[#1f2d36] via-75% to-[#1d2d33] text-white">
      {taskApps.map((app) => (
        <button
          key={app.label}
          aria-label={app.label}
          className={`flex w-[62px] flex-col items-center ${app.active ? "bg-[#536067]" : ""}`}
        >
          <span className="flex flex-1 items-center">{app.icon}</span>
          <span className={`h-[3px] ${app.active ? "w-full" : "w-[51px]"} ${app.running ? "bg-[#76b9ed]" : ""}`} />
        </button>
      ))}
      <div className="ml-auto flex items-center pr-[5px]">
        <button aria-label="显示隐藏的图标">
          <Icon w={16} h={16}><path d="M1 11l7-7 7 7" stroke="#fff" strokeWidth="1.500" /></Icon>
        </button>
        <button aria-label="音量" className="ml-3">
          <Icon w={20} h={18}>
            <path d="M1 6h3l4-4v14l-4-4H1z" stroke="#fff" strokeWidth="1.200" />
            <path d="M11 6q2 3 0 6" stroke="#fff" strokeWidth="1.200" />
            <path d="M14 4q4 5 0 10M17 2q5 7 0 14" stroke="#7d888d" strokeWidth="1.200" />
          </Icon>
        </button>
        <button aria-label="网络" className="ml-[10px]">
          <Icon w={20} h={18}>
            <path d="M5 2h14v11H3V8M1 2h4v5H1zM11 13v4M7 17h8" stroke="#fff" strokeWidth="1.200" />
          </Icon>
        </button>
        <button aria-label="QQ" className="ml-[10px]">
          <Icon>
            <path d="M4 8c0-10 12-10 12 0l2 7-3 4H5l-4-4z" fill="#111" />
            <circle cx="8" cy="5" r="1.500" fill="#fff" />
            <circle cx="12" cy="5" r="1.500" fill="#fff" />
            <path d="M6 8h8l-4 2z" fill="#f9a61a" />
            <path d="M6 12h8v6H6z" fill="#fff" />
            <path d="M3 9q7 5 14 1l-1 3q-4 1-8 0v4H5v-5z" fill="#e3212b" />
            <path d="M1 18h7v2H1z" fill="#f9a61a" />
            <path d="M10 9h10v8h-5l-2 2v-2h-3z" fill="#fbb92e" />
          </Icon>
        </button>
        <button className="ml-2 text-xl leading-6 font-medium">英</button>
        <button className="ml-[18px] text-center text-[15px] leading-[23px]">
          <span className="block">16:16</span>
          <span className="block">2020/3/1</span>
        </button>
        <button aria-label="操作中心" className="ml-[30px]">
          <Icon w={22} h={22}><path d="M1 2h19v15h-7l-3 3-3-3H1z" stroke="#fff" strokeWidth="1.300" /></Icon>
        </button>
        <div className="ml-6 h-[50px] w-px bg-[#6b777c]" />
      </div>
    </div>
  )
}

export default function App() {
  return (
    <div className="relative flex min-h-screen flex-col overflow-hidden bg-white font-['Noto_Sans','Noto_Sans_CJK_SC',sans-serif]">
      <AppHeader />
      <Ribbon />
      <Workspace />
      <StatusBar />
      <Taskbar />
      <TableInputDialog />
    </div>
  )
}
